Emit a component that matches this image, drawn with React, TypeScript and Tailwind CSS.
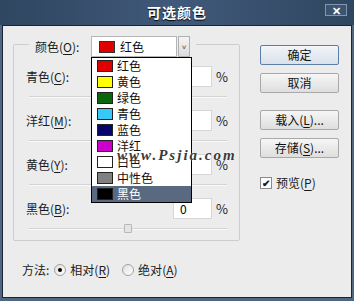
import React from "react";

const font = { fontFamily: '"Noto Sans CJK SC", "Liberation Sans", sans-serif' };

type Item = { name: string; color: string };

const items: Item[] = [
  { name: "红色", color: "#e00000" },
  { name: "黄色", color: "#ffff00" },
  { name: "绿色", color: "#0b650b" },
  { name: "青色", color: "#38c8f8" },
  { name: "蓝色", color: "#06066a" },
  { name: "洋红", color: "#cc00cc" },
  { name: "白色", color: "#ffffff" },
  { name: "中性色", color: "#808080" },
  { name: "黑色", color: "#000000" },
];

function Key({ label, k, tail = "" }: { label: string; k: string; tail?: string }) {
  return (
    <span>
      {label}(<span className="underline underline-offset-2">{k}</span>){tail}
    </span>
  );
}

function Row({ label, k, value, last, thumb }: { label: string; k: string; value: string; last?: boolean; thumb?: boolean }) {
  return (
    <div>
      <div className="flex items-center h-[21px] pl-[12px]">
        <span className="w-[147px] text-[12px] text-[#1a1a1a]">
          <Key label={label} k={k} tail=":" />
        </span>
        <div className="w-[39px] h-[21px] bg-white border border-[#d6d6d6] text-[12px] pl-[6px] leading-[19px]">{value}</div>
        <span className="ml-[4px] text-[13px] text-[#222]">%</span>
      </div>
      <div className={`relative ml-[15px] mr-[12px] ${last ? "h-[21px]" : "h-[23px]"}`}>
        <div className="absolute left-0 right-0 top-[9px] h-[2px] bg-[#d4d4d4] border-b border-[#f8f8f8]" />
        {thumb && (
          <div className="absolute left-[95px] top-[5px] w-[8px] h-[9px] bg-[#e4e4e4] border border-[#b8b8b8] rounded-[1px]" />
        )}
      </div>
    </div>
  );
}

function Button({ children, primary }: { children: React.ReactNode; primary?: boolean }) {
  return (
    <div
      className={`w-[79px] h-[20px] flex items-center justify-center text-[12px] text-[#111] rounded-[2px] border ${
        primary ? "border-[#5b7fa6] bg-gradient-to-b from-[#f2f5f9] to-[#d9e1ea]" : "border-[#a9a9a9] bg-gradient-to-b from-[#f6f6f6] to-[#dedede]"
      }`}
    >
      {children}
    </div>
  );
}

function Radio({ on }: { on?: boolean }) {
  return (
    <span className="w-[12px] h-[12px] rounded-full border border-[#a0a0a0] bg-gradient-to-br from-[#e0e0e0] to-white flex items-center justify-center">
      {on && <span className="w-[4px] h-[4px] rounded-full bg-black" />}
    </span>
  );
}

export default function App() {
  return (
    <div className="w-[354px] h-[301px] bg-[#4f6783] flex flex-col select-none" style={font}>
      <div className="h-[25px] relative flex items-center justify-center bg-gradient-to-r from-[#2f4660] via-[#41597a] to-[#2f4660]">
        <span className="text-white font-bold text-[14px] tracking-[1px] [text-shadow:0_1px_1px_#000]">可选颜色</span>
        <div className="absolute right-[7px] top-[4px] w-[22px] h-[12px] border border-[#8396ad] bg-[#3d5470] flex items-center justify-center text-white text-[11px] font-bold leading-none">
          ✕
        </div>
      </div>
      <div className="flex-1 mx-[2px] mb-[3px] bg-[#ececec] border border-[#1b2532] flex relative">
        <div className="pl-[10px] pt-[10px] flex flex-col">
          <fieldset className="w-[227px] border border-[#cdcdcd] rounded-[2px] px-0 pb-0 m-0 pt-[14px]">
            <legend className="ml-[15px] h-[16px] px-[6px] p-0 pr-[6px]">
              <div className="relative flex items-center h-[21px]">
                <span className="text-[12px] text-[#1a1a1a] w-[56px]">
                  <Key label="颜色" k="O" tail=":" />
                </span>
                <div className="w-[86px] h-[21px] bg-white border border-[#b5b5b5] flex items-center pl-[7px]">
                  <span className="w-[16px] h-[12px] border border-[#333]" style={{ background: "#e00000" }} />
                  <span className="ml-[5px] text-[12px] text-[#111]">红色</span>
                </div>
                <div className="ml-[1px] w-[12px] h-[21px] bg-gradient-to-b from-[#f4f4f4] to-[#dcdcdc] border border-[#b0b0b0] flex items-center justify-center text-[8px] text-[#444]">
                  ˅
                </div>
                <div className="absolute left-[56px] top-[21px] w-[101px] border border-black bg-white z-10">
                  {items.map((it, i) => {
                    const sel = i === items.length - 1;
                    return (
                      <div key={it.name} className={`h-[16px] flex items-center pl-[5px] ${sel ? "bg-[#596a80] text-white" : "text-[#111]"}`}>
                        <span className="w-[16px] h-[12px] border border-[#222]" style={{ background: it.color }} />
                        <span className="ml-[4px] text-[12px] leading-none">{it.name}</span>
                      </div>
                    );
                  })}
                </div>
              </div>
            </legend>
            <Row label="青色" k="C" value="" />
            <Row label="洋红" k="M" value="" />
            <Row label="黄色" k="Y" value="" />
            <Row label="黑色" k="B" value="0" last thumb />
          </fieldset>
          <div className="mt-[21px] ml-[9px] flex items-center h-[16px] text-[12px] text-[#1a1a1a]">
            <span>方法:</span>
            <span className="ml-[5px]"><Radio on /></span>
            <span className="ml-[4px]"><Key label="相对" k="R" /></span>
            <span className="ml-[12px]"><Radio /></span>
            <span className="ml-[4px]"><Key label="绝对" k="A" /></span>
          </div>
        </div>
        <div className="ml-[20px] pt-[19px] flex flex-col">
          <Button primary>确定</Button>
          <div className="mt-[8px]"><Button>取消</Button></div>
          <div className="mt-[17px]"><Button><Key label="载入" k="L" tail="..." /></Button></div>
          <div className="mt-[8px]"><Button><Key label="存储" k="S" tail="..." /></Button></div>
          <div className="mt-[16px] flex items-center text-[12px] text-[#1a1a1a]">
            <span className="w-[12px] h-[12px] border border-[#8a8a8a] bg-white flex items-center justify-center text-[10px] font-bold leading-none">✔</span>
            <span className="ml-[4px]"><Key label="预览" k="P" /></span>
          </div>
        </div>
        <div className="absolute left-[114px] top-[118px] z-20 italic font-bold text-[15px] tracking-[2px] text-[#3a3a3a] [text-shadow:0_0_2px_#fff]" style={{ fontFamily: '"Liberation Serif", serif' }}>
          www.Psjia.com
        </div>
      </div>
    </div>
  );
}
